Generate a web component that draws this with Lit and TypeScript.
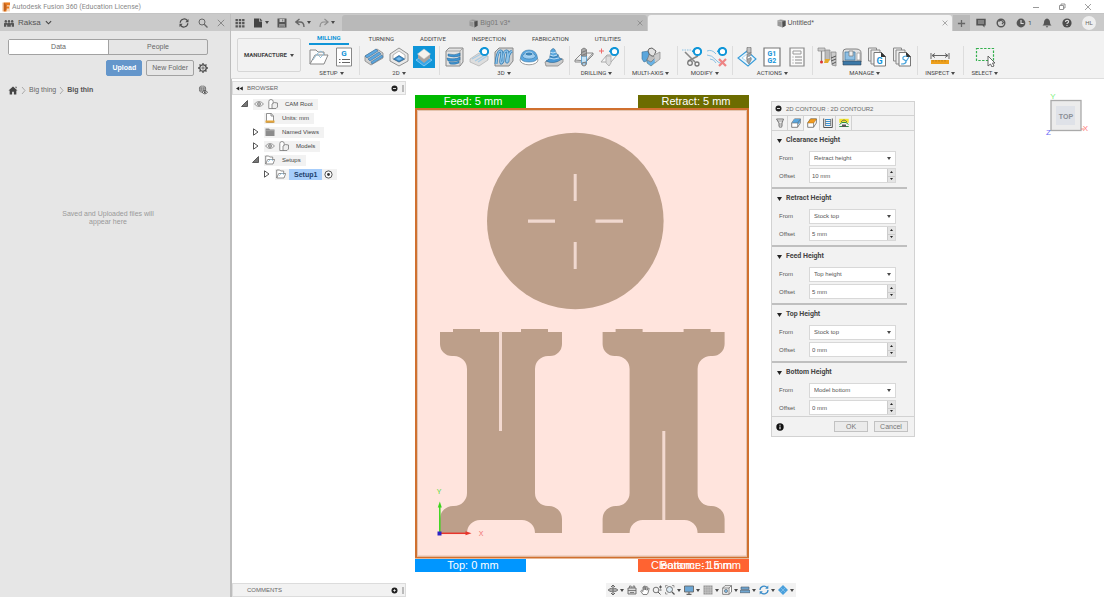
import { LitElement, html, svg, css, nothing, TemplateResult } from "lit";
import { customElement, state } from "lit/decorators.js";
import { classMap } from "lit/directives/class-map.js";

const icon = (w: number, h: number, body: unknown, vb = "0 0 20 20") =>
  html`<svg class="icon" width=${w} height=${h} viewBox=${vb} fill="none" aria-hidden="true">${body}</svg>`;

const caret = html`<svg class="caret" width="4" height="3" viewBox="0 0 4 3" aria-hidden="true"><path d="M0 0H4L2 3Z" fill="#4a4a4a" /></svg>`;

const orb = svg`<circle cx="15.500" cy="4.500" r="3.600" fill="#fff" stroke="#0f95d8" stroke-width="2"/><path d="M10.500 5l2.500-3.800" stroke="#0f95d8" stroke-width="1.500"/>`;
const bit = svg`<path d="M8 1.500q2-1.200 4 0V7H8Z" fill="#c2c2c2" stroke="#777" stroke-width=".8"/><path d="M8 8.500l4-2v2.500l-4 2v2.500l4-2v2.500l-2 4-2-2.500Z" fill="#a9a9a9" stroke="#7b7b7b" stroke-width=".7"/>`;
const pages = svg`<path d="M1.500 1h8v13h-8Z" fill="#eee" stroke="#888"/><path d="M4 3h9v14H4Z" fill="#eee" stroke="#888"/><path d="M7 5.500h7.500l4 4V19H7Z" fill="#fff" stroke="#777"/><path d="M14 5l5 5h-5Z" fill="#333"/>`;

const I = {
  setup: svg`<path d="M1 17V3h6l2 2h6v3" fill="#fafafa" stroke="#888"/><path d="M1 17L6 8h13l-4 9Z" fill="#fff" stroke="#888"/><path d="M4 13l4-6 4-3 3 3-4 4M8 7l4 4" stroke="#8dbbd6" stroke-width=".9"/>`,
  gcode: svg`<path d="M2.500 1h15v18h-15Z" fill="#fff" stroke="#888"/><text x="10" y="9" text-anchor="middle" font-family="Roboto, sans-serif" font-weight="700" font-size="8" fill="#1293d8">G</text><path d="M5 12.500h1.500M8 12.500h8M5 15.500h1.500M8 15.500h8" stroke="#666" stroke-width="1.200"/>`,
  face: svg`<path d="M1 9L13 2l6 4v5L7 18l-6-4Z" fill="#cfcfcf" stroke="#888" stroke-width=".8"/><path d="M1 9L12 2l2 2L3 11ZM4 12L15 5l2 2L6 14ZM7 15l11-7 1 2-11 7Z" fill="#5ba8e2" stroke="#3d719a" stroke-width=".6"/>`,
  pocket: svg`<path d="M10 1l9 6v7l-9 5-9-5V7Z" fill="#e8e8e8" stroke="#888" stroke-width=".9"/><path d="M10 4l6 4v4l-6 3-6-3V8Z" fill="#fff" stroke="#999" stroke-width=".7"/><path d="M4.500 12L10 8.500l5.500 3.500L10 15Z" fill="#3e8ecb" stroke="#275f8c" stroke-width=".7"/><path d="M7 12l3-2 3 2-3 1.500Z" fill="#79bbeb"/>`,
  contour: svg`<path d="M2 13l8-5 8 5-8 6Z" fill="#3aa7e8" stroke="#a3d6f5" stroke-width=".7"/><path d="M4 7v4l6 5 6-5V7Z" fill="#a9a39e"/><path d="M10 2l6.500 5-6.500 5L3.500 7Z" fill="#f6f2ec" stroke="#ccc" stroke-width=".5"/>`,
  adaptive: svg`<path d="M2 4l3-3h14v14l-3 4H2Z" fill="#e2e2e2" stroke="#888"/><path d="M2 4h14v15M16 4l3-3" stroke="#999" stroke-width=".8"/><path d="M4 7q7 2 12-1v3q-6 2-12 0ZM3 11q8 2 13-1v3q-5 2-12 1ZM5 15q7 1 10-1v2q-4 2-9 1Z" fill="#3c94d5" stroke="#27628e" stroke-width=".5"/>`,
  parallel: svg`<path d="M1 12l9-6 9 3v4l-9 6-9-4Z" fill="#ddd" stroke="#b5b5b5" stroke-width=".8"/><path d="M3 12l9-5M6 14l10-6M9 15l9-6" stroke="#a8cbe4" stroke-width="1.400"/>${orb}`,
  steep: svg`<path d="M1 5l4-4h14v13l-4 5H1Z" fill="#d2d2d2" stroke="#888"/><path d="M2 17Q3 5 6 4t1 8q-1 7 2 2Q9 5 12 4t1 7q-1 6 1 3 0-8 4-10" stroke="#2a77b1" stroke-width="2.800"/><path d="M2 17Q3 5 6 4t1 8q-1 7 2 2Q9 5 12 4t1 7q-1 6 1 3 0-8 4-10" stroke="#8ec4ea" stroke-width="1.400"/>`,
  dome: svg`<ellipse cx="10" cy="13" rx="9" ry="4.800" fill="#fff" stroke="#888" stroke-width=".8"/><path d="M1.500 11q1-8 8.500-8t8.500 8q-1 4-8.500 4t-8.500-4Z" fill="#5ba8e2" stroke="#3e7aa6" stroke-width=".6"/><ellipse cx="10" cy="9" rx="6.500" ry="3" fill="#9dcdf1" stroke="#3e7aa6" stroke-width=".6"/><ellipse cx="10" cy="7" rx="4" ry="2" fill="#3c84b9" stroke="#d3ebfb" stroke-width=".7"/>`,
  tower: svg`<path d="M1 15l5-3h13v3l-5 4H2Z" fill="#ccc" stroke="#888" stroke-width=".8"/><path d="M2 14q4-1 4-5l8-1q1 4 4 4-8 6-16 2Z" fill="#4798d6" stroke="#2a6590" stroke-width=".6"/><path d="M6 9q1-3 .500-5 3-5 5 0 0 3 3 4-4 4-8.500 1Z" fill="#5aa8df" stroke="#2a6590" stroke-width=".6"/><path d="M6 5q3 2 6 0M6 8q3 2 7 0M5 11q5 2 10 0" stroke="#d5ecfb" stroke-width=".8"/>`,
  drill: svg`<path d="M1 13L8 6h11l-7 8Z" fill="#f1f1f1" stroke="#888"/><path d="M1 13v2h11l7-7V6" stroke="#888"/><path d="M7.500 9h5v8h-5Z" fill="#c9e3f4" stroke="#4b9bd0" stroke-width=".8"/><path d="M7.500 2.500q2.500-3 5 0V9h-5Z" fill="#aaa" stroke="#777" stroke-width=".8"/><path d="M7.500 5.500l5-2M7.500 8.500l5-2M8 18q2 2 4 0v-3l-4 1Z" stroke="#777"/>`,
  hole: svg`<path d="M2 15l6-7h10l-6 7Z" fill="#f4f4f4" stroke="#aaa"/><path d="M7 9h5v7l-2 3-3-3Z" fill="#ddd" stroke="#aaa" stroke-width=".8"/><path d="M0 4h5M2.500 1.500v5" stroke="#ef6b6b"/>${orb}`,
  multi: svg`<path d="M1 5l7-1v9l-5 2-2-3Z" fill="#5aa6dc" stroke="#376f98" stroke-width=".6"/><path d="M6 12l6-4 4 6-6 5-4-3Z" fill="#68b1e5" stroke="#577" stroke-width=".6"/><path d="M8 8l4-4 2 7-4 4-4-2Z" fill="#bdbdbd" stroke="#777" stroke-width=".7"/><path d="M7 4q0-3 4-3l4 3-2 5q-4 1-6-5Z" fill="#e2e2e2" stroke="#555" stroke-width=".9"/><path d="M13 8l6-3v7l-5 4" fill="#ccc" stroke="#888" stroke-width=".7"/>`,
  trim: svg`<path d="M0 3h8q3 0 4 3" stroke="#8bc1e4" stroke-dasharray="1.500 1"/><path d="M3 5l10 10M16 9L6 14" stroke="#888" stroke-width="1.600"/><circle cx="8" cy="16" r="2.300" stroke="#777" stroke-width="1.300"/><circle cx="15" cy="17" r="2" stroke="#777" stroke-width="1.300"/>${orb}`,
  remove: svg`<path d="M0 4q5-2 9 3M0 8q5 0 9 5t8 2M3 12q4 0 6 4" stroke="#8bc1e4"/><path d="M12 12l7 7M19 12l-7 7" stroke="#ee8484" stroke-width="2.200"/>${orb}`,
  simulate: svg`<path d="M10 4l9 8-8 7-10-8Z" fill="#e9f5fc" stroke="#369bd9" stroke-width="1.100"/><path d="M5 11l5-4 5 5-4 3Z" fill="#fff" stroke="#91c7e9" stroke-width=".7"/><g transform="translate(2 -1)">${bit}</g>`,
  post: svg`<path d="M2 1h16v18H2Z" fill="#fff" stroke="#777" stroke-width="1.200"/><g font-family="Roboto, sans-serif" font-weight="700" font-size="7" fill="#1293d8" text-anchor="middle"><text x="10" y="9">G1</text><text x="10" y="16">G2</text></g>`,
  sheet: svg`<path d="M3 1h14v18H3Z" fill="#fafafa" stroke="#888" stroke-width="1.200"/><path d="M6 4h8v3H6Z" stroke="#999"/><path d="M5.500 10h1M8 10h7M5.500 13h1M8 13h7M5.500 16h1M8 16h7" stroke="#888"/>`,
  tools: svg`<path d="M1 1h7v3H1Z" fill="#ccc" stroke="#888" stroke-width=".7"/><path d="M4.500 4v11" stroke="#888" stroke-width="1.300"/><circle cx="4.500" cy="15" r="1.500" fill="#d33"/><path d="M8 3h5v10H8Z" fill="#bbb" stroke="#888" stroke-width=".7"/><path d="M8 12h5l-2 4H7Z" fill="#e3a92c"/><path d="M14 5h5v14l-4-1Z" fill="#ccc" stroke="#888" stroke-width=".8"/><path d="M14 11l5-2M14 14l5-2M15 17l4-2" stroke="#555"/>`,
  machine: svg`<path d="M1 15V5q0-3 3-3h10q5 0 5 4v9Z" fill="#e2e2e2" stroke="#777" stroke-width=".9"/><path d="M3 5h10v8H3Z" fill="#8fc0e4" stroke="#467da4" stroke-width=".8"/><path d="M7 4h4v5H7Z" fill="#eee" stroke="#777" stroke-width=".7"/><path d="M15 6h3v7h-3Z" fill="#fff" stroke="#888" stroke-width=".6"/><path d="M1 14h18v4H1Z" fill="#3b78a7" stroke="#345" stroke-width=".6"/>`,
  pagesG: svg`${pages}<text x="12.500" y="17" text-anchor="middle" font-family="Roboto, sans-serif" font-weight="700" font-size="9" fill="#1293d8">G</text>`,
  pagesS: svg`${pages}<path d="M15 9q-5 0-4 3l3 2q1 3-5 3M17 10l-4 6" stroke="#4aa5dc" stroke-width="1.200"/>`,
  measure: svg`<path d="M1 6v6M19 6v6M2 8.500h16M5 6.500L2 8.500l3 2M15 6.500l3 2-3 2" stroke="#666"/><path d="M1 13h18v4H1Z" fill="#eea01d"/><path d="M3 13v1.500M6 13v1.500M9 13v1.500M12 13v1.500M15 13v1.500" stroke="#9d6a10" stroke-width=".7"/>`,
  select: svg`<path d="M1.500 1.500h17v12h-17Z" stroke="#33b04d" stroke-width="1.200" stroke-dasharray="2.400 1.400"/><path d="M13 9v10l2.500-2 1.500 3 2-1-1.500-3H20Z" fill="#fff" stroke="#555" stroke-width=".9"/>`,
};

const G = {
  people: svg`<g fill="#555"><circle cx="2" cy="2" r="1.300"/><circle cx="5.500" cy="2" r="1.300"/><circle cx="9" cy="2" r="1.300"/><path d="M0 8V4.500l1-1h2l.5 1 1-1h2l1 1 .5-1h2l1 1V8H8.500V6h-1v2h-4V6h-1v2Z"/></g>`,
  refresh: svg`<path d="M1.200 4.800A4 4 0 0 1 8.300 2.500M8.800 5.200A4 4 0 0 1 1.700 7.500" stroke="#4a4a4a" stroke-width="1.200"/><path d="M9.500 1v3.200H6.300ZM.5 9V5.800h3.200Z" fill="#4a4a4a"/>`,
  search: svg`<circle cx="4" cy="4" r="3" stroke="#666"/><path d="M6.200 6.200L9.500 9.500" stroke="#666" stroke-width="1.300"/>`,
  close: svg`<path d="M1 1l8 8M9 1L1 9" stroke="#777"/>`,
  chevron: svg`<path d="M1 2l3 3 3-3" stroke="#444" stroke-width="1.300"/>`,
  gear: svg`<circle cx="5" cy="5" r="3.200" stroke="#4f4f4f" stroke-width="1.300"/><circle cx="5" cy="5" r="1.100" stroke="#4f4f4f" stroke-width=".8"/><path d="M5 0v2M5 8v2M0 5h2M8 5h2M1.500 1.500l1.300 1.300M7.200 7.200l1.300 1.300M8.500 1.500L7.200 2.800M2.800 7.200L1.500 8.500" stroke="#4f4f4f" stroke-width="1.300"/>`,
  home: svg`<path d="M5 .5L10 5H8.700v4.500H6V6.500H4v3H1.300V5H0ZM7.500.8H9v2L7.500 1.500Z" fill="#444"/>`,
  globe: svg`<circle cx="4.500" cy="4.500" r="4" fill="#666"/><path d="M.5 4.500h8M4.500.5v8M1.500 2.300h6M1.500 6.700h4" stroke="#ddd" stroke-width=".5"/><ellipse cx="4.500" cy="4.500" rx="2" ry="4" stroke="#ddd" stroke-width=".5"/><path d="M4 8q3-3.500 6 0-3 3.500-6 0Z" fill="#eee" stroke="#444" stroke-width=".9"/><circle cx="7" cy="8" r="1" fill="#444"/>`,
  grid: svg`<path d="M.500 1h2.400v2.200H.500ZM3.800 1h2.400v2.200H3.800ZM7.100 1h2.400v2.200H7.100ZM.500 4.100h2.400v2.200H.500ZM3.800 4.100h2.400v2.200H3.800ZM7.100 4.100h2.400v2.200H7.100ZM.500 7.200h2.400v2.200H.500ZM3.800 7.200h2.400v2.200H3.800ZM7.100 7.200h2.400v2.200H7.100Z" fill="#555"/>`,
  file: svg`<path d="M1 .5h5v3h3v6H1ZM6.700 0L9.500 2.800H6.700Z" fill="#444"/>`,
  save: svg`<path d="M.5.5h9v9h-9Z" fill="#555"/><path d="M2.500 1h5v3h-5ZM2.500 6h5v3h-5Z" fill="#c6c6c6"/><path d="M3 7h4M3 8.300h4M5.700 1.400v2" stroke="#555" stroke-width=".8"/>`,
  undo: svg`<path d="M4.500 1L.8 4l3.700 3M1.500 4H5q4 0 4 5" stroke="#666" stroke-width="1.400"/>`,
  redo: svg`<path d="M5.500 1l3.700 3-3.700 3M8.500 4H5Q1 4 1 9" stroke="#8c8c8c" stroke-width="1.100"/>`,
  doc: svg`<path d="M.5 1.500L4 .5l5.500 1v6L6 9.500l-5.500-2Z" fill="#999"/><path d="M5.500 3l4-1v5.500L6 9.500Z" fill="#4e4e4e"/><path d="M.5 2L5.500 3v6.500" stroke="#ddd" stroke-width=".5"/>`,
  plus: svg`<path d="M5 1v8M1 5h8" stroke="#666" stroke-width="1.400"/>`,
  chat: svg`<path d="M.3.800h9.400v6.700H8.500v2l-2-2H.3Z" fill="#555"/><path d="M2 3h6M2 5h6" stroke="#ccc" stroke-width=".8"/>`,
  sync: svg`<circle cx="5" cy="5" r="3.800" stroke="#555" stroke-width="1.400"/><path d="M2.500 3.500q3-2.500 5 1L6 6" stroke="#555" stroke-width="1.200"/>`,
  clock: svg`<circle cx="5" cy="5" r="4.400" fill="#555"/><path d="M5 2v3.500h2.700" stroke="#ddd" stroke-width="1.100"/>`,
  bell: svg`<path d="M5 .5q3 .8 3 4 0 2 1.500 3H.5Q2 6.500 2 4.500q0-3.200 3-4ZM3.700 8.300h2.600L5 9.800Z" fill="#555"/>`,
  help: svg`<circle cx="5" cy="5" r="4.600" fill="#4c4c4c"/><path d="M3.500 4q0-1.600 1.600-1.600T6.600 3.800Q6.600 4.700 5 5.500v.6M5 7v1.100" stroke="#ddd" stroke-width="1.100"/>`,
  dot: svg`<circle cx="3.500" cy="3.500" r="3" fill="#222"/><path d="M2 3.500h3" stroke="#eee" stroke-width=".9"/>`,
  plusdot: svg`<circle cx="3.500" cy="3.500" r="3" fill="#222"/><path d="M2.300 3.500h2.400M3.500 2.300v2.400" stroke="#eee" stroke-width=".9"/>`,
  rewind: svg`<path d="M3.200.5v4L0 2.500ZM6.800.5v4L3.500 2.500Z" fill="#222"/>`,
  open: svg`<path d="M6.500.5v6H.5Z" fill="#777" stroke="#333" stroke-width=".7"/>`,
  closed: svg`<path d="M1.500.8v6.400L6 4Z" fill="#fff" stroke="#444" stroke-width=".9"/>`,
  eye: svg`<path d="M.5 5q4.500-5 9 0-4.500 5-9 0Z" stroke="#999"/><circle cx="5" cy="5" r="1.500" fill="#bbb" stroke="#888" stroke-width=".9"/>`,
  body: svg`<path d="M.8 9.500V2.500q0-2 2.200-2t2.200 2v7Z" fill="#fff" stroke="#777" stroke-width=".8"/><path d="M4 9.500V5q2-2.500 5.500-1v4l-1.500 1.500Z" fill="#eee" stroke="#777" stroke-width=".8"/>`,
  units: svg`<path d="M1.500.5h4.700l2.300 2.300v6.700h-7Z" fill="#fff" stroke="#777" stroke-width=".8"/><path d="M6 .5v2.500h2.500" stroke="#777" stroke-width=".8"/><path d="M.5 7.500h9v2.200h-9Z" fill="#e3a43a"/>`,
  folder: svg`<path d="M.5 1.500h3.500l1 1h4.500v6.500h-9Z" fill="#8c8c8c"/><path d="M.5 3.600h9" stroke="#bbb" stroke-width=".5"/>`,
  setups: svg`<path d="M.7 9V1h3l1 1h3v2M.7 9l2-4.500h7L8 9Z" fill="#fff" stroke="#777" stroke-width=".8"/><path d="M3 7l3-3 2 2" stroke="#8cbfe0" stroke-width=".7"/>`,
  target: svg`<circle cx="4.500" cy="4.500" r="3.600" fill="#fff" stroke="#444" stroke-width=".9"/><circle cx="4.500" cy="4.500" r="1.400" fill="#333"/>`,
  info: svg`<circle cx="4" cy="4" r="3.700" fill="#111"/><path d="M4 3.500v2.700M4 1.700v1" stroke="#fff" stroke-width="1.100"/>`,
};

const D: TemplateResult[] = [
  svg`<path d="M1.500 1h7L7 5v3.500L5.500 9.800 4 8.500V5Z" fill="#eee" stroke="#666" stroke-width=".9"/><path d="M2.500 3h5M4 6h3M4 8h3" stroke="#888" stroke-width=".8"/>`,
  svg`<path d="M.7 5L3.500.9h6L9.300 5 6.500 9.300H.7Z" fill="#fff" stroke="#666" stroke-width=".8"/><path d="M3.500.9h6L9 4.500 6.800 7V5H.9Z" fill="#5aa7df"/><path d="M.7 5h5.900v4.200M6.600 5L9.500.9" stroke="#666" stroke-width=".6"/>`,
  svg`<path d="M.7 5L3.500.9h6L9.300 5 6.500 9.300H.7Z" fill="#fff" stroke="#666" stroke-width=".8"/><path d="M.7 5L3.500.9h6L6.700 5Z" fill="#f19c22" stroke="#a86a12" stroke-width=".5"/><path d="M6.600 5v4.200" stroke="#666" stroke-width=".7"/>`,
  svg`<path d="M.7.5v9h8.600v-9" stroke="#555"/><path d="M2.500 1.500h5M2.500 3.500h5M2.500 5.500h5M2.500 7.500h5" stroke="#3b93d4" stroke-width="1.100"/><path d="M2.500 1v7M7.500 1v7" stroke="#555" stroke-width=".6"/>`,
  svg`<path d="M.3.800h9.400v4H.3Z" fill="#f1e229"/><path d="M2 4q3-4 6 0" stroke="#555" stroke-width=".8"/><path d="M.3 8.500h9.400M.5 6.500L3 4.500h4l2.500 2" stroke="#2e8f45"/><path d="M3 6.500h4v2.500H3Z" fill="#555"/>`,
] as TemplateResult[];

const NAV: [TemplateResult, boolean][] = [
  [svg`<path d="M5 0v10M0 5h10M3 2l2-2 2 2M3 8l2 2 2-2" stroke="#666"/><ellipse cx="5" cy="5" rx="4.500" ry="1.800" stroke="#666" stroke-width=".8"/>`, true],
  [svg`<path d="M1 3h8v6H1Z" fill="#ddd" stroke="#666" stroke-width=".9"/><path d="M2.500 3V1h1.700v2M6 3V1h1.700v2M1 5.500h8M3 7.500h4" stroke="#666" stroke-width=".8"/>`, false],
  [svg`<path d="M3 9.500L.7 6l1-.7L3 6.500V2l1-.3V5l.3-4h1L5.600 5l.7-3.500 1 .2L7 5.300 8.200 3l1 .4L8 8 7 9.500Z" fill="#fff" stroke="#666" stroke-width=".8"/>`, false],
  [svg`<circle cx="4" cy="5" r="2.800" stroke="#666" stroke-width=".9"/><path d="M6 7l2.500 2.500M7 2h3M8.500.5v3M7.500 5h2" stroke="#555"/>`, false],
  [svg`<circle cx="4.500" cy="4.500" r="3" fill="#dceaf3" stroke="#666" stroke-width=".9"/><path d="M7 7l2.500 2.500" stroke="#555" stroke-width="1.300"/><path d="M.5 2.500v-2h2M7 .500h2v2M.5 7v2h2" stroke="#777" stroke-width=".7"/>`, true],
  [svg`<path d="M.5 1h9v6h-9Z" fill="#6ba6d4" stroke="#666" stroke-width=".9"/><path d="M2.500 9.300h5M5 7v2" stroke="#666" stroke-width="1.200"/>`, true],
  [svg`<path d="M.5.5h9v9h-9Z" fill="#999"/><path d="M2.800.5v9M5 .5v9M7.200.5v9M.5 2.800h9M.5 5h9M.5 7.200h9" stroke="#ddd" stroke-width=".5"/>`, true],
  [svg`<path d="M.7 3L3 .7h6.500V7L7 9.300H.7ZM.7 3H7v6.300M7 3L9.500.7" fill="#fff" stroke="#666" stroke-width=".8"/><circle cx="4" cy="6" r="1.700" fill="#79b0d8" stroke="#666" stroke-width=".6"/>`, true],
  [svg`<path d="M1 2h8v2.400H1ZM0 5.300h10v2.400H0Z" fill="#6fa6d0" stroke="#456" stroke-width=".6"/>`, true],
  [svg`<path d="M1 5a4 4 0 0 1 7-2.500M9 5a4 4 0 0 1-7 2.500" stroke="#3a8cc9" stroke-width="1.300"/><path d="M9.300.5v3.200H6.200ZM.7 9.500V6.300h3.100Z" fill="#3a8cc9"/>`, true],
  [svg`<path d="M5 0l5 5-5 5-5-5Z" fill="#4aa0dc"/><path d="M2.500 2.500l5 5M7.500 2.500l-5 5" stroke="#9bcdf0" stroke-width=".6"/>`, true],
] as [TemplateResult, boolean][];

const GROUPS: { label: string; icons: [string, TemplateResult][] }[] = [
  { label: "SETUP", icons: [["New Setup", I.setup], ["NC Program", I.gcode]] },
  { label: "2D", icons: [["Face", I.face], ["2D Pocket", I.pocket], ["2D Contour", I.contour]] },
  { label: "3D", icons: [["Adaptive", I.adaptive], ["Parallel", I.parallel], ["Steep", I.steep], ["Scallop", I.dome], ["Ramp", I.tower]] },
  { label: "DRILLING", icons: [["Drill", I.drill], ["Hole Recognition", I.hole]] },
  { label: "MULTI-AXIS", icons: [["Swarf", I.multi]] },
  { label: "MODIFY", icons: [["Trim", I.trim], ["Delete Passes", I.remove]] },
  { label: "ACTIONS", icons: [["Simulate", I.simulate], ["Post Process", I.post], ["Setup Sheet", I.sheet]] },
  { label: "MANAGE", icons: [["Tool Library", I.tools], ["Machine Library", I.machine], ["Post Library", I.pagesG], ["Template Library", I.pagesS]] },
  { label: "INSPECT", icons: [["Measure", I.measure]] },
  { label: "SELECT", icons: [["Select", I.select]] },
] as never;

const shared = css`
  :host, :host * { box-sizing: border-box; }
  button, input, select { font: inherit; color: inherit; margin: 0; padding: 0; border: 0; background: none; border-radius: 0; min-width: 0; }
  button { display: inline-flex; align-items: center; justify-content: center; gap: 2px; white-space: nowrap; }
  a { color: inherit; text-decoration: none; }
  svg { display: block; flex: none; }
`;

@customElement("data-panel")
class DataPanel extends LitElement {
  static styles = [shared, css`
    :host { display: flex; flex-direction: column; background: #e6e6e6; border-right: 2px solid #bdbdbd; color: #666; font: 7px/10px "Liberation Sans", sans-serif; }
    .head { display: flex; align-items: center; gap: 9px; height: 17px; padding: 0 5px 0 4px; background: #cacaca; }
    .team { margin-right: auto; gap: 4px; font-size: 8px; color: #555; }
    .body { padding: 8px 22px 0 8px; }
    .tabs { display: grid; grid-template-columns: 1fr 1fr; height: 16px; border: 1px solid #a2a2a2; border-radius: 2px; }
    .tabs button + button { border-left: 1px solid #a2a2a2; }
    .tabs .on { background: #fff; }
    .actions { display: flex; justify-content: flex-end; align-items: center; gap: 4px; margin-top: 5px; }
    .btn { height: 16px; padding: 0 5px; border: 1px solid #a2a2a2; border-radius: 2px; }
    .primary { background: #6496cb; border-color: #6496cb; color: #fff; font-weight: 700; }
    .path { display: flex; align-items: center; gap: 3px; margin-top: 8px; height: 12px; }
    .path .globe { margin-left: auto; }
    .path b { color: #555; }
    .empty { width: 100px; margin: 114px auto 0; text-align: center; line-height: 8px; color: #999; }
  `];
  render() {
    const sep = icon(5, 9, svg`<path d="M1 1l3 3.500L1 8" stroke="#aaa"/>`, "0 0 5 9");
    return html`
      <div class="head">
        <button class="team">${icon(10, 8, G.people, "0 0 11 8")} Raksa ${icon(7, 7, G.chevron, "0 0 8 7")}</button>
        <button aria-label="Refresh">${icon(10, 10, G.refresh, "0 0 10 10")}</button>
        <button aria-label="Search">${icon(10, 10, G.search, "0 0 10 10")}</button>
        <button aria-label="Close">${icon(8, 8, G.close, "0 0 10 10")}</button>
      </div>
      <div class="body">
        <div class="tabs"><button class="on">Data</button><button>People</button></div>
        <div class="actions">
          <button class="btn primary">Upload</button>
          <button class="btn">New Folder</button>
          <button aria-label="Settings">${icon(10, 10, G.gear, "0 0 10 10")}</button>
        </div>
        <nav class="path">
          <a href="#" aria-label="Home">${icon(10, 9, G.home, "0 0 10 10")}</a>${sep}<a href="#">Big thing</a>${sep}<b>Big thin</b>
          <button class="globe" aria-label="Open on the web">${icon(10, 10, G.globe, "0 0 10 11")}</button>
        </nav>
        <p class="empty">Saved and Uploaded files will appear here</p>
      </div>`;
  }
}

@customElement("app-ribbon")
class AppRibbon extends LitElement {
  @state() private tool = "2D Contour";
  static styles = [shared, css`
    :host { display: block; color: #444; font: 6px/8px Roboto, sans-serif; }
    .docs { display: flex; height: 17px; background: #cacaca; }
    .quick { display: flex; align-items: center; gap: 8px; width: 111px; padding-left: 4px; }
    .doc { flex: 1; display: flex; align-items: center; justify-content: center; gap: 3px; background: #b9b9b9; border-radius: 3px 3px 0 0; margin-top: 1px; color: #777; font: 7px/10px "Liberation Sans", sans-serif; }
    .doc .name { margin: 0 auto; padding-left: 4px; }
    .doc .x { padding-right: 4px; }
    .active { background: #f2f2f2; color: #555; margin-left: 1px; }
    .add { width: 17px; margin: 1px 0 0 1px; background: #b9b9b9; }
    .status { display: flex; align-items: center; justify-content: space-between; width: 134px; padding: 0 8px 0 6px; }
    .avatar { width: 14px; height: 14px; border-radius: 7px; background: #eee; color: #666; }
    .bar { display: flex; gap: 4px; height: 48px; padding-left: 6px; background: #f2f2f2; border-bottom: 1px solid #ddd; }
    .space { width: 64px; height: 34px; margin-top: 7px; border: 1px solid #d6d6d6; border-radius: 2px; font-weight: 700; gap: 3px; }
    .tabs { display: flex; gap: 13px; height: 15px; padding: 1px 0 0 4px; }
    .tabs button { padding: 0 6px 0 7px; }
    .tabs .on { color: #0f95d8; font-weight: 700; border-bottom: 2px solid #0f95d8; padding: 1px 8px 0; margin-bottom: 1px; }
    .groups { display: flex; }
    .group { padding: 0 5px 0 3px; display: flex; flex-direction: column; align-items: center; background: linear-gradient(#ddd, #ddd) right top / 1px 29px no-repeat; }
    .group:last-child { background: none; }
    .icons { display: flex; gap: 3px; }
    .icons button { width: 22px; height: 22px; }
    .icons .on { background: #0f95d8; }
    .label { padding: 0 4px; height: 10px; }
  `];
  render() {
    const q = (n: string, g: unknown, c = false) => html`<button aria-label=${n}>${icon(10, 10, g, "0 0 10 10")}${c ? caret : nothing}</button>`;
    return html`
      <div class="docs">
        <div class="quick">${q("Data panel", G.grid)}${q("File", G.file, true)}${q("Save", G.save)}${q("Undo", G.undo, true)}${q("Redo", G.redo, true)}</div>
        <div class="doc"><button class="name">${icon(9, 9, G.doc, "0 0 10 10")} Big01 v3*</button><button class="x" aria-label="Close Big01">${icon(6, 6, G.close, "0 0 10 10")}</button></div>
        <div class="doc active"><button class="name">${icon(9, 9, G.doc, "0 0 10 10")} Untitled*</button><button class="x" aria-label="Close Untitled">${icon(6, 6, G.close, "0 0 10 10")}</button></div>
        <button class="add" aria-label="New design">${icon(9, 9, G.plus, "0 0 10 10")}</button>
        <div class="status">
          ${q("Notifications", G.chat)}${q("Extensions", G.sync)}
          <button aria-label="Job status">${icon(10, 10, G.clock, "0 0 10 10")} 1</button>
          ${q("Alerts", G.bell)}${q("Help", G.help)}
          <button class="avatar">HL</button>
        </div>
      </div>
      <div class="bar">
        <button class="space">MANUFACTURE ${caret}</button>
        <div>
          <div class="tabs">${["MILLING", "TURNING", "ADDITIVE", "INSPECTION", "FABRICATION", "UTILITIES"].map((t, i) => html`<button class=${classMap({ on: i === 0 })}>${t}</button>`)}</div>
          <div class="groups">${GROUPS.map((g) => html`
            <div class="group">
              <div class="icons">${g.icons.map(([n, s]) => html`<button class=${classMap({ on: n === this.tool })} aria-label=${n} @click=${() => (this.tool = n)}>${icon(20, 20, s)}</button>`)}</div>
              <button class="label">${g.label} ${caret}</button>
            </div>`)}
          </div>
        </div>
      </div>`;
  }
}

@customElement("browser-tree")
class BrowserTree extends LitElement {
  static styles = [shared, css`
    :host { display: flex; flex-direction: column; color: #444; font: 6px/11px "Liberation Sans", sans-serif; }
    .strip { display: flex; align-items: center; gap: 4px; height: 14px; padding: 0 1px 0 3px; background: #f2f2f2; border: 1px solid #dcdcdc; color: #666; }
    .strip span { margin-right: auto; }
    .strip .pad { width: 7px; }
    .grip { width: 2px; height: 7px; background: #bbb; }
    ul { list-style: none; margin: 2px 0 auto; padding: 0; }
    li { display: flex; align-items: center; height: 14px; gap: 4px; }
    .d0 { padding-left: 9px; }
    .d1 { padding-left: 20px; }
    .d2 { padding-left: 31px; }
    .tri { width: 8px; }
    .pill { display: flex; align-items: center; gap: 4px; height: 11px; padding-left: 1px; background: #f2f2f2; }
    .pill .text { padding: 0 5px 0 3px; }
    .pill .chosen { padding: 0 5px; margin-left: -1px; background: #a6cdfb; color: #1d3f6d; font-size: 7px; font-weight: 700; }
    .pill .radio { padding-right: 4px; margin-left: -2px; }
  `];
  render() {
    const rows: [number, "open" | "closed" | "", string[], string][] = [
      [0, "open", ["eye", "body"], "CAM Root"],
      [1, "", ["units"], "Units: mm"],
      [1, "closed", ["folder"], "Named Views"],
      [1, "closed", ["eye", "body"], "Models"],
      [1, "open", ["setups"], "Setups"],
      [2, "closed", ["setups"], "Setup1"],
    ];
    return html`
      <div class="strip">${icon(7, 5, G.rewind, "0 0 7 5")}<span>BROWSER</span>${icon(7, 7, G.dot, "0 0 7 7")}<i class="grip"></i></div>
      <ul>${rows.map(([d, t, ics, name]) => html`
        <li class="d${d}">
          <span class="tri">${t ? icon(8, 8, G[t], "0 0 8 8") : nothing}</span>
          <span class="pill">${ics.map((k) => icon(10, 10, (G as any)[k], "0 0 10 10"))}
            <span class=${d === 2 ? "chosen" : "text"}>${name}</span>
            ${d === 2 ? html`<span class="radio">${icon(9, 9, G.target, "0 0 9 9")}</span>` : nothing}
          </span>
        </li>`)}</ul>
      <div class="strip"><i class="pad"></i><span>COMMENTS</span>${icon(7, 7, G.plusdot, "0 0 7 7")}<i class="grip"></i></div>`;
  }
}

@customElement("contour-dialog")
class ContourDialog extends LitElement {
  static styles = [shared, css`
    :host { display: block; background: #f2f2f2; border: 1px solid #d2d2d2; color: #555; font: 6px/8px "Liberation Sans", sans-serif; }
    header { display: flex; align-items: center; gap: 4px; height: 14px; padding-left: 3px; border-bottom: 1px solid #d2d2d2; color: #666; }
    .tabs { display: grid; grid-template-columns: repeat(5, 16px) 1fr; height: 15px; }
    .tabs > * { border-bottom: 1px solid #d2d2d2; }
    .tabs button { border-right: 1px solid #d2d2d2; }
    .tabs .on { border-bottom-color: #f2f2f2; background: #f8f8f8; }
    section { width: 135px; padding-bottom: 3px; border-bottom: 2px solid #bfbfbf; }
    section:last-of-type { border: 0; padding: 0; }
    h2 { display: flex; align-items: center; gap: 4px; height: 18px; margin: 0; padding: 1px 0 0 5px; font: 700 7px/9px Roboto, sans-serif; color: #444; }
    .row { display: grid; grid-template-columns: 30px 87px; align-items: center; height: 17px; padding-left: 7px; }
    .row.from { height: 18px; }
    .field { display: grid; grid-template-columns: 1fr 8px; height: 15px; background: #fff; border: 1px solid #d8d8d8; align-items: center; }
    select { appearance: none; grid-area: 1 / 1 / 2 / 3; width: 100%; height: 13px; padding-left: 4px; }
    .field .caret { grid-area: 1 / 2; pointer-events: none; }
    input { width: 100%; height: 13px; padding-left: 2px; }
    .spin { display: grid; grid-template-rows: 1fr 1fr; height: 13px; background: #e4e4e4; border-left: 1px solid #ccc; }
    .spin button + button { border-top: 1px solid #ccc; }
    footer { display: flex; align-items: center; gap: 6px; height: 20px; padding: 0 6px 0 4px; border-top: 1px solid #d2d2d2; font-size: 7px; color: #777; }
    footer svg { margin-right: auto; }
    footer button { width: 34px; height: 11px; border: 1px solid #c2c2c2; background: #ebebeb; }
  `];
  render() {
    const sections = [
      ["Clearance Height", "Retract height", "10 mm"],
      ["Retract Height", "Stock top", "5 mm"],
      ["Feed Height", "Top height", "5 mm"],
      ["Top Height", "Stock top", "0 mm"],
      ["Bottom Height", "Model bottom", "0 mm"],
    ];
    const tabs = ["Tool", "Geometry", "Heights", "Passes", "Linking"];
    return html`
      <header>${icon(7, 7, G.dot, "0 0 7 7")}2D CONTOUR : 2D CONTOUR2</header>
      <div class="tabs">${D.map((d, i) => html`<button class=${classMap({ on: i === 2 })} aria-label=${tabs[i]}>${icon(10, 10, d, "0 0 10 10")}</button>`)}<i></i></div>
      ${sections.map(([t, from, off], i) => html`
        <section>
          <h2>${icon(5, 4, svg`<path d="M0 0H5L2.500 4Z" fill="#222"/>`, "0 0 5 4")}${t}</h2>
          <div class="row from"><label for="f${i}">From</label><div class="field"><select id="f${i}"><option>${from}</option></select>${caret}</div></div>
          <div class="row"><label for="o${i}">Offset</label><div class="field"><input id="o${i}" .value=${off} /><span class="spin">
            <button aria-label="Increase">${icon(3, 2, svg`<path d="M0 2H3L1.500 0Z" fill="#222"/>`, "0 0 3 2")}</button>
            <button aria-label="Decrease">${icon(3, 2, svg`<path d="M0 0H3L1.500 2Z" fill="#222"/>`, "0 0 3 2")}</button></span></div></div>
        </section>`)}
      <footer>${icon(8, 8, G.info, "0 0 8 8")}<button>OK</button><button>Cancel</button></footer>`;
  }
}

@customElement("app-root")
class AppRoot extends LitElement {
  static styles = [shared, css`
    :host { display: flex; flex-direction: column; height: 100vh; background: #fff; font: 7px/10px "Liberation Sans", sans-serif; overflow: hidden; }
    .title { display: flex; align-items: center; gap: 2px; height: 14px; padding: 0 12px 0 2px; border-bottom: 1px solid #c4c4c4; color: #888; font: 7px/12px Roboto, sans-serif; }
    .title span { margin-right: auto; }
    .wins { display: flex; gap: 18px; }
    .main { flex: 1; min-height: 0; display: grid; grid-template-columns: 232px 1fr; }
    .work { display: flex; flex-direction: column; min-width: 0; margin-left: -1px; }
    .stage { flex: 1; min-height: 0; display: grid; grid-template-columns: 174px 1fr; padding: 2px 0 0 1px; }
    .scene { position: relative; }
    .model { position: absolute; left: 9px; top: 14px; width: 334px; font: 11px/13px "Liberation Sans", sans-serif; color: #fff; }
    .tags { display: grid; grid-template-columns: 111px 111px; justify-content: space-between; height: 13px; text-align: center; }
    .tags > span { padding-left: 5px; }
    .feed { background: #00b900; }
    .retract { background: #6c6c00; }
    .top { background: #0096ff; }
    .clear { background: #ff6331; display: grid; }
    .clear span { grid-area: 1 / 1; }
    .cube { position: absolute; right: 10px; top: 8px; }
    .dialog { position: absolute; right: 189px; top: 20px; width: 144px; }
    .nav { position: absolute; left: 200px; bottom: 0; display: flex; justify-content: space-between; align-items: center; width: 190px; height: 14px; padding: 0 2px; background: #f2f2f2; }
  `];
  render() {
    const leg = svg`<path fill="#bd9f8a" d="M440 332h13v-3h27v3h41v-3h27v3h14v12a12 12 0 0 1-12 12h-2a13 13 0 0 0-13 13v124a13 13 0 0 0 13 13h1a13 13 0 0 1 13 13v14h-27a13 13 0 0 0-13-13h-42a13 13 0 0 0-13 13h-27v-14a13 13 0 0 1 13-13h1a13 13 0 0 0 13-13V369a13 13 0 0 0-13-13h-2a12 12 0 0 1-12-12Z"/>`;
    return html`
      <div class="title">
        ${icon(8, 10, svg`<path d="M0 0h9v10H0Z" fill="#f8d9bd"/><path d="M2 0h7v3H5v1.500h3v2.200H5V10H2Z" fill="#e87a1d"/><path d="M2 0v10l3-2V3Z" fill="#c4611b"/>`, "0 0 9 10")}
        <span>Autodesk Fusion 360 (Education License)</span>
        <div class="wins">
          <button aria-label="Minimize">${icon(8, 8, svg`<path d="M1 4.500h6" stroke="#999"/>`, "0 0 8 8")}</button>
          <button aria-label="Restore">${icon(8, 8, svg`<path d="M1.500 2.500h4v4h-4ZM3 2V1h4v4H6" stroke="#888" stroke-width=".9"/>`, "0 0 8 8")}</button>
          <button aria-label="Close window">${icon(8, 8, svg`<path d="M1 1l6 6M7 1L1 7" stroke="#888" stroke-width=".8"/>`, "0 0 8 8")}</button>
        </div>
      </div>
      <div class="main">
        <data-panel></data-panel>
        <div class="work">
          <app-ribbon></app-ribbon>
          <div class="stage">
            <browser-tree></browser-tree>
            <div class="scene">
              <div class="model">
                <div class="tags"><span class="feed">Feed: 5 mm</span><span class="retract">Retract: 5 mm</span></div>
                <svg width="334" height="451" viewBox="415 108 334 451" fill="none">
                  <rect x="416" y="109" width="332" height="448.500" fill="#ffe4dd" stroke="#d0702f" stroke-width="2" />
                  <rect x="417.500" y="110.500" width="329" height="445.500" stroke="#e3c3ae" />
                  <circle cx="575.300" cy="221" r="88.300" fill="#bd9f8a" />
                  <path d="M573.700 174h3v27h-3ZM573.700 242h3v27h-3ZM528 219.500h27v3.300h-27ZM595.500 219.500h27.500v3.300h-27.500Z" fill="#f0d8cf" />
                  ${leg}<g transform="translate(162.600 0)">${leg}</g>
                  <path d="M499 331h3v100h-3ZM662.300 431h3v89h-3Z" fill="#f3d9d0" />
                  <path d="M439.800 533V506" stroke="#3bd51c" stroke-width="1.500" /><path d="M437.800 507.500l2-6 2 6Z" fill="#3bd51c" />
                  <path d="M440 533.300h27" stroke="#e8352c" stroke-width="1.500" /><path d="M465.500 531.300l6 2-6 2Z" fill="#e8352c" />
                  <path d="M437.500 531.500h4v4h-4Z" fill="#2c24c4" />
                  <g font-family="Liberation Sans, sans-serif" font-size="7" text-anchor="middle"><text x="439" y="494" fill="#58d93a">Y</text><text x="481" y="536" fill="#f07070">X</text></g>
                </svg>
                <div class="tags"><span class="top">Top: 0 mm</span><span class="clear"><span>Clearance: 15 mm</span><span>Bottom: -1 mm</span></span></div>
              </div>
              <contour-dialog class="dialog"></contour-dialog>
              <svg class="cube" width="50" height="50" viewBox="1044 89 50 50" fill="none">
                <rect x="1051" y="100.500" width="30" height="30" fill="#ececec" stroke="#aaa" stroke-width="1.300" />
                <rect x="1056" y="106" width="19" height="19" fill="#dfe2e8" />
                <path d="M1081 129h3" stroke="#f07070" stroke-width=".8" />
                <g font-family="Liberation Sans, sans-serif" font-size="8" text-anchor="middle">
                  <text x="1066" y="118.500" font-size="7" font-weight="700" fill="#8b8f96">TOP</text>
                  <text x="1053" y="99" fill="#7ef07e">Y</text><text x="1085.500" y="131" fill="#ff7a7a">X</text><text x="1048.500" y="135" fill="#6a6af5">Z</text>
                </g>
              </svg>
              <div class="nav">${NAV.map(([s, c]) => html`<button aria-label="View tool">${icon(10, 10, s, "0 0 10 10")}${c ? caret : nothing}</button>`)}</div>
            </div>
          </div>
        </div>
      </div>`;
  }
}
